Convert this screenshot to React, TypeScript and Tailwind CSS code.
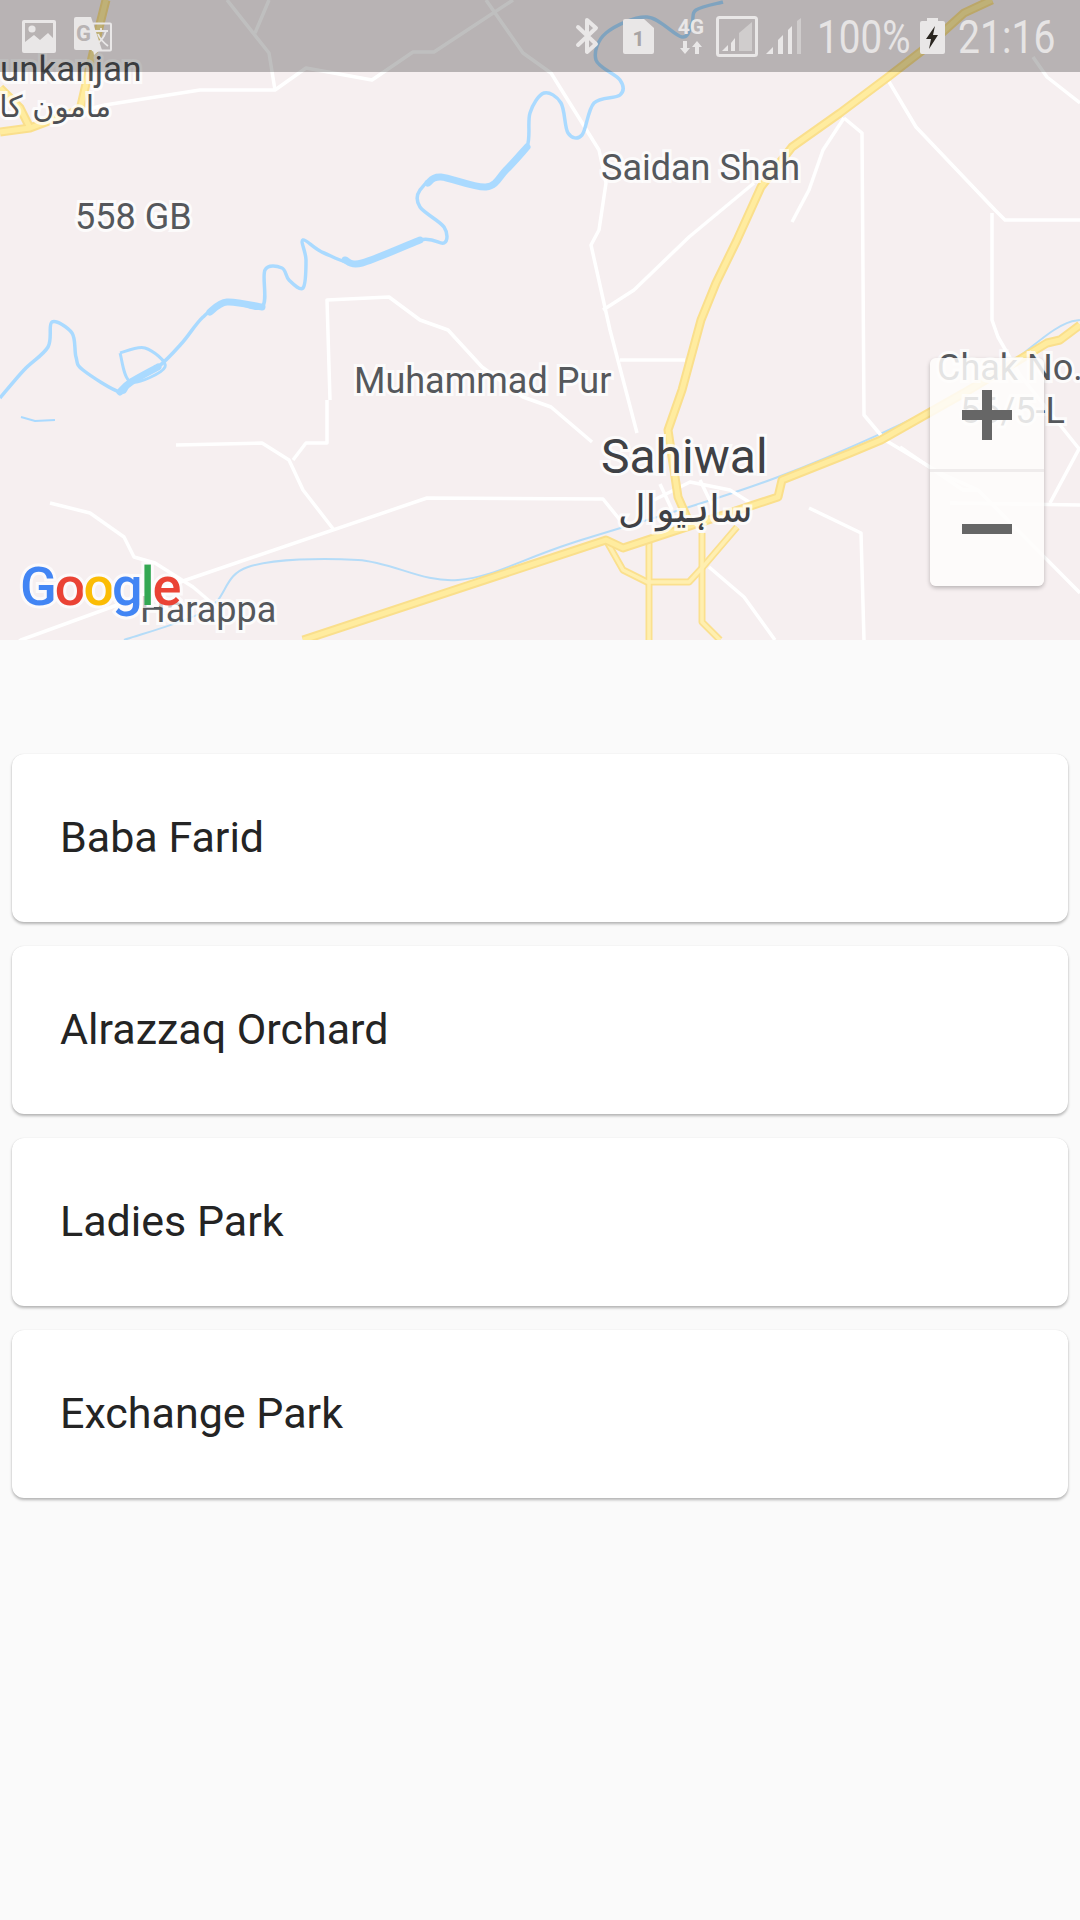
const parks = ["Baba Farid", "Alrazzaq Orchard", "Ladies Park", "Exchange Park"]

/* ── Map geometry, in page pixels ───────────────────────────────── */
const whiteRoads = [
  "60,116 105,105 200,90 275,90 306,68 372,80 413,52 434,52 513,0",
  "275,90 269,53 227,0",
  "255,33 269,0",
  "486,0 523,53 551,73 599,150 606,183 599,230 591,245 610,330 637,433",
  "603,310 634,290 689,237 754,183",
  "888,80 916,127 995,210 1005,220 1080,220",
  "992,213 992,320 998,337 1020,375 1080,450",
  "844,118 862,133 864,415 885,440 940,473 978,490 1080,593",
  "844,118 823,150 809,190 792,222",
  "1033,57 1047,77 1080,103",
  "330,400 327,300 389,297 420,320 448,330 482,367 523,397 551,407 592,442",
  "327,400 327,443 306,443 293,460",
  "176,445 262,443 289,460 303,490 334,530",
  "0,655 21,640 186,580 427,498 603,499 620,520",
  "50,503 90,513 124,537 134,557 155,563 193,587 220,610",
  "809,508 861,533 864,640",
  "709,567 744,597 775,640",
  "620,360 685,360",
  "1050,503 1080,447",
  "950,503 1080,505",
  "900,447 963,490 977,490",
  "654,500 690,482 730,490 757,507",
  "660,484 672,510",
  "700,480 712,505",
]

const bigRoads = [
  "992,0 964,13 923,50 888,77 840,113 792,147 761,187 737,240 716,283 701,320 682,390 668,430 678,497 689,522",
  "303,640 606,540 623,548 778,497 782,480 850,453 881,440 964,393 1047,343 1060,340 1080,325",
  "106,0 96,40 80,110 62,116 30,128 0,132",
  "0,88 20,108 30,128",
]

const smallRoads = [
  "606,540 623,570 647,582 689,582 702,568 737,527",
  "649,540 649,640",
  "702,533 702,622 720,640",
]

const riverPoints =
  "723,2 696,10 692,23 682,37 647,17 606,33 596,60 620,80 620,95 594,103 582,135 568,133 561,103 544,93 530,113 527,147 506,170 486,187 441,177 420,190 420,207 444,227 444,243 420,240 362,263 324,253 303,240 306,260 303,288 289,280 282,268 265,270 262,307 227,302 203,317 182,343 158,367 131,382 120,392 83,370 76,357 72,333 52,322 48,347 24,370 0,398"

const riverThick = [
  "527,147 506,170 486,187 441,177 428,183",
  "420,240 362,263 345,260",
  "262,307 227,302 210,312",
  "158,367 131,382 120,392",
]

// rivers bend, roads don't: run a catmull-rom through the points
function smoothPath(points: string) {
  const p = points.split(" ").map((s) => s.split(",").map(Number))
  let d = `M${p[0][0]} ${p[0][1]}`
  for (let i = 0; i < p.length - 1; i++) {
    const a = p[Math.max(i - 1, 0)]
    const b = p[i]
    const c = p[i + 1]
    const e = p[Math.min(i + 2, p.length - 1)]
    d += ` C${b[0] + (c[0] - a[0]) / 6} ${b[1] + (c[1] - a[1]) / 6} ${c[0] - (e[0] - b[0]) / 6} ${c[1] - (e[1] - b[1]) / 6} ${c[0]} ${c[1]}`
  }
  return d
}

const labels = [
  { text: "unkanjan", cls: "top-[52px] left-0 text-[35px] text-[#4d4f53]" },
  { text: "558 GB", cls: "top-[199px] left-[75px] text-[36px] text-[#55585c]" },
  { text: "Saidan Shah", cls: "top-[150px] left-[601px] text-[36px] text-[#55585c]" },
  { text: "Muhammad Pur", cls: "top-[363px] left-[354px] text-[36px] text-[#55585c]" },
  { text: "Sahiwal", cls: "top-[433px] left-[601px] text-[48px] text-[#3f4145]" },
  { text: "Harappa", cls: "top-[592px] left-[140px] text-[36px] text-[#55585c]" },
  { text: "Chak No.", cls: "top-[350px] left-[937px] text-[36px] text-[#55585c] whitespace-nowrap" },
  { text: "56/5-L", cls: "top-[393px] left-[960px] text-[36px] text-[#55585c]" },
]

function MapBackground() {
  return (
    <svg className="absolute inset-0" width="1080" height="640" viewBox="0 0 1080 640" fill="none">
      <path d={smoothPath("124,640 207,610 248,567 358,560 458,580 572,543 778,477 964,393 1054,330 1080,320")} stroke="#b5dcf8" strokeWidth="2" />
      <polyline points="21,417 35,421 55,420" stroke="#aadaff" strokeWidth="2" />
      <path d={smoothPath("120,353 145,348 165,367 131,382 120,353")} stroke="#aadaff" strokeWidth="3" />
      {whiteRoads.map((p) => (
        <polyline key={p} points={p} stroke="#ffffff" strokeWidth="3.5" strokeLinejoin="round" />
      ))}
      <path d={smoothPath(riverPoints)} stroke="#aadaff" strokeWidth="3.5" strokeLinejoin="round" />
      {riverThick.map((p) => (
        <path key={p} d={smoothPath(p)} stroke="#aadaff" strokeWidth="7" strokeLinecap="round" />
      ))}
      {smallRoads.map((p) => (
        <polyline key={p} points={p} stroke="#fbe08e" strokeWidth="7" strokeLinejoin="round" />
      ))}
      {smallRoads.map((p) => (
        <polyline key={p + "c"} points={p} stroke="#ffefb0" strokeWidth="3.5" strokeLinejoin="round" />
      ))}
      {bigRoads.map((p) => (
        <polyline key={p} points={p} stroke="#fadf8c" strokeWidth="9" strokeLinejoin="round" />
      ))}
      {bigRoads.map((p) => (
        <polyline key={p + "c"} points={p} stroke="#ffec9f" strokeWidth="5" strokeLinejoin="round" />
      ))}
    </svg>
  )
}

function GoogleLogo() {
  return (
    <div className="absolute top-[560px] left-[20px] font-['Roboto',sans-serif] font-medium text-[54px] leading-none tracking-[-2px] [-webkit-text-stroke:6px_rgba(255,255,255,0.7)] [paint-order:stroke_fill]">
      <span className="text-[#4285f4]">G</span>
      <span className="text-[#ea4335]">o</span>
      <span className="text-[#fbbc05]">o</span>
      <span className="text-[#4285f4]">g</span>
      <span className="text-[#34a853]">l</span>
      <span className="text-[#ea4335]">e</span>
    </div>
  )
}

/* ── Status bar icons ───────────────────────────────────────────── */
function ImageIcon() {
  return (
    <svg width="34" height="33" viewBox="0 0 34 33">
      <rect width="34" height="33" rx="2" fill="#e9e7e7" />
      <path d="M3 22 L12 15 L18 20 L26 13 L31 18 L31 3 L3 3 Z" fill="#b8b3b3" />
      <circle cx="10" cy="9" r="3.6" fill="#e9e7e7" />
    </svg>
  )
}

function TranslateIcon() {
  return (
    <svg width="38" height="38" viewBox="0 0 38 38">
      <path d="M2 0 H17 L28 33 H2 Q0 33 0 31 V2 Q0 0 2 0 Z" fill="#e9e7e7" />
      <rect x="18.5" y="6.5" width="18.5" height="27" rx="1" fill="none" stroke="#e9e7e7" strokeWidth="2" />
      <path d="M19 33 L20 38 L26 33 Z" fill="#e9e7e7" />
      <text x="2" y="24" fontFamily="Roboto, sans-serif" fontWeight="700" fontSize="22" fill="#b8b3b3">G</text>
      <path d="M21 14 H34 M27 11 V14 M32 14 C30 21 26 25 22 27 M24 17 C26 22 30 26 34 29" stroke="#e9e7e7" strokeWidth="1.8" fill="none" />
    </svg>
  )
}

function BluetoothIcon() {
  return (
    <svg width="25" height="38" viewBox="0 0 25 38" fill="none">
      <path d="M3 10 L21 27 L12 35 V3 L21 11 L3 28" stroke="#e9e7e7" strokeWidth="4" strokeLinejoin="round" strokeLinecap="round" />
    </svg>
  )
}

function SimIcon() {
  return (
    <svg width="31" height="35" viewBox="0 0 31 35">
      <path d="M2 0 H21 L31 9 V33 Q31 35 29 35 H2 Q0 35 0 33 V2 Q0 0 2 0 Z" fill="#e9e7e7" />
      <text x="15.5" y="27" textAnchor="middle" fontFamily="Roboto, sans-serif" fontWeight="700" fontSize="21" fill="#a8a4a4">1</text>
    </svg>
  )
}

function NetworkIcon() {
  return (
    <div className="flex w-[28px] flex-col items-center">
      <span className="text-[21px] leading-[18px] font-bold text-[#e9e7e7] font-['Roboto',sans-serif]">4G</span>
      <svg width="22" height="13" viewBox="0 0 22 13" className="mt-[5px]" fill="#e9e7e7">
        <path d="M3 0 H7 V7 H10 L5 13 L0 7 H3 Z" />
        <path d="M15 13 H19 V6 H22 L17 0 L12 6 H15 Z" />
      </svg>
    </div>
  )
}

function BoxedSignalIcon() {
  return (
    <svg width="42" height="41" viewBox="0 0 42 41">
      <rect x="1.5" y="1.5" width="39" height="38" rx="2" fill="none" stroke="#e9e7e7" strokeWidth="3" />
      <path d="M6 35 L12 29 V35 Z" fill="#e9e7e7" />
      <path d="M15 35 V27 L19 22 V35 Z" fill="#e9e7e7" />
      <path d="M23 35 V17 L36 6 V35 Z" fill="#d0cdcd" />
    </svg>
  )
}

function SignalIcon() {
  return (
    <svg width="35" height="36" viewBox="0 0 35 36">
      <path d="M0 36 L7 29 V36 Z" fill="#e9e7e7" />
      <path d="M12 36 V22 L17 17 V36 Z" fill="#e9e7e7" />
      <path d="M22 36 V12 L26 8 V36 Z" fill="#e9e7e7" />
      <path d="M31 36 V3 L35 0 V36 Z" fill="#cfcccc" />
    </svg>
  )
}

function BatteryIcon() {
  return (
    <svg width="25" height="36" viewBox="0 0 25 36">
      <path d="M7 0 H18 V3 H23 Q25 3 25 5 V34 Q25 36 23 36 H2 Q0 36 0 34 V5 Q0 3 2 3 H7 Z" fill="#e9e7e7" />
      <path d="M15 8 L6 21 H11 L9 31 L18 17 H13 Z" fill="#2a2620" />
    </svg>
  )
}

function StatusBar() {
  return (
    <div className="absolute inset-x-0 top-0 flex h-[72px] items-center justify-between bg-black/25 pl-[22px] pr-[25px]">
      <div className="flex items-center gap-[18px]">
        <ImageIcon />
        <TranslateIcon />
      </div>
      <div className="flex items-center">
        <BluetoothIcon />
        <div className="ml-[23px]"><SimIcon /></div>
        <div className="ml-[23px]"><NetworkIcon /></div>
        <div className="ml-[11px]"><BoxedSignalIcon /></div>
        <div className="ml-[8px]"><SignalIcon /></div>
        <span className="ml-[16px] mt-[2px] w-[91px] origin-left scale-x-[0.84] text-[46px] leading-none font-normal whitespace-nowrap text-[#e6e4e4] font-['Roboto',sans-serif]">100%</span>
        <div className="ml-[12px]"><BatteryIcon /></div>
        <span className="ml-[13px] mt-[2px] w-[97px] origin-left scale-x-[0.85] text-[46px] leading-none font-normal whitespace-nowrap text-[#e6e4e4] font-['Roboto',sans-serif]">21:16</span>
      </div>
    </div>
  )
}

function ZoomControls() {
  return (
    <div className="absolute top-[358px] left-[930px] flex h-[228px] w-[114px] flex-col rounded-md bg-[#fefdfc]/85 shadow-[0_2px_4px_rgba(0,0,0,0.25)]">
      <div className="relative h-[114px] border-b-[3px] border-[#efecec]">
        <div className="absolute top-[52px] left-[32px] h-[10px] w-[50px] bg-[#666666]" />
        <div className="absolute top-[32px] left-[52px] h-[50px] w-[10px] bg-[#666666]" />
      </div>
      <div className="relative flex-1">
        <div className="absolute top-[52px] left-[32px] h-[10px] w-[50px] bg-[#666666]" />
      </div>
    </div>
  )
}

export default function App() {
  return (
    <div className="flex min-h-[1920px] flex-col bg-[#fafafa] font-['Roboto',sans-serif]">
      {/* Map */}
      <div className="relative h-[640px] overflow-hidden bg-[#f6eff0]">
        <MapBackground />

        {labels.map((l) => (
          <div
            key={l.text}
            className={`absolute leading-none [-webkit-text-stroke:6px_rgba(255,255,255,0.75)] [paint-order:stroke_fill] ${l.cls}`}
          >
            {l.text}
          </div>
        ))}
        <div className="absolute top-[92px] right-[969px] whitespace-nowrap text-[30px] leading-none text-[#4d4f53] font-['DejaVu_Sans',sans-serif] [-webkit-text-stroke:6px_rgba(255,255,255,0.75)] [paint-order:stroke_fill]" dir="rtl">
          مامون کا
        </div>
        <div className="absolute top-[490px] left-[618px] whitespace-nowrap text-[38px] leading-none text-[#3f4145] font-['DejaVu_Sans',sans-serif] [-webkit-text-stroke:6px_rgba(255,255,255,0.75)] [paint-order:stroke_fill]" dir="rtl">
          ساہیوال
        </div>

        <GoogleLogo />
        <ZoomControls />
        <StatusBar />
      </div>

      {/* Park list */}
      <div className="flex flex-col gap-6 px-3 pt-[114px]">
        {parks.map((name) => (
          <div
            key={name}
            className="flex h-[168px] items-center rounded-xl bg-white pb-[2px] pl-[48px] text-[43px] text-[#242424] shadow-[0_2px_3px_rgba(0,0,0,0.28),0_0_1px_rgba(0,0,0,0.12)]"
          >
            {name}
          </div>
        ))}
      </div>
    </div>
  )
}
